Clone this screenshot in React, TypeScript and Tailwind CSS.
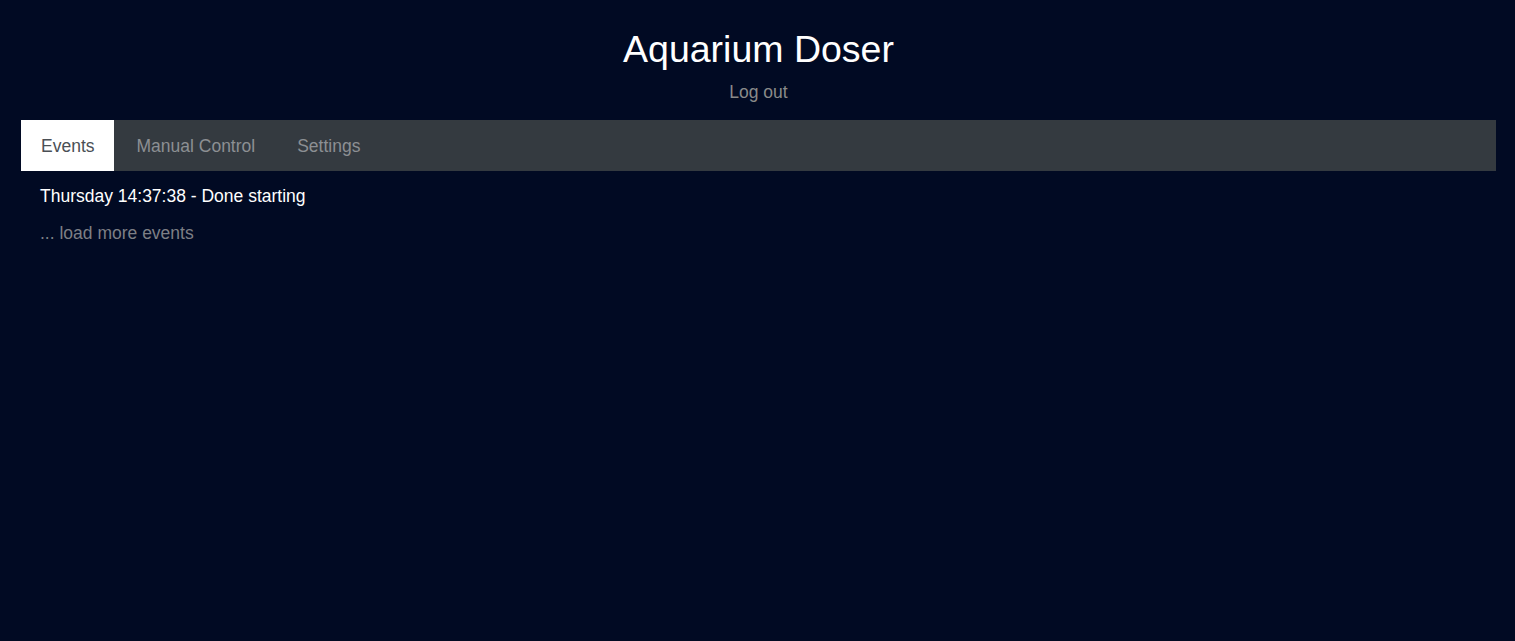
import React from "react";

export default function App() {
  return (
    <div
      className="min-h-[641px] w-full bg-[#010a23] pl-[21px] pr-[19px]"
      style={{ fontFamily: '"Liberation Sans", Arial, sans-serif' }}
    >
      <div className="flex flex-col items-center pt-[27px]">
        <h1 className="text-[37.5px] leading-[45px] text-white">Aquarium Doser</h1>
        <a className="mt-[7px] text-[17.5px] leading-[26px] text-[#8a8a8a] cursor-pointer">Log out</a>
      </div>
      <div className="mt-[15px] flex h-[51px] items-stretch bg-[#343a40]">
        <div className="flex items-center bg-white pl-[20px] pr-[19px] pt-[2px] text-[17.5px] text-[#4a4f55]">Events</div>
        <div className="flex items-center pl-[23px] pr-[21px] pt-[2px] text-[17.5px] text-[#8c8f93]">Manual Control</div>
        <div className="flex items-center px-[21px] pt-[2px] text-[17.5px] text-[#8c8f93]">Settings</div>
      </div>
      <div className="px-[19px] pt-[12px] text-[17.5px] leading-[26px]">
        <div className="text-white">Thursday 14:37:38 - Done starting</div>
        <div className="mt-[11px] text-[#7d7f85]">... load more events</div>
      </div>
    </div>
  );
}
